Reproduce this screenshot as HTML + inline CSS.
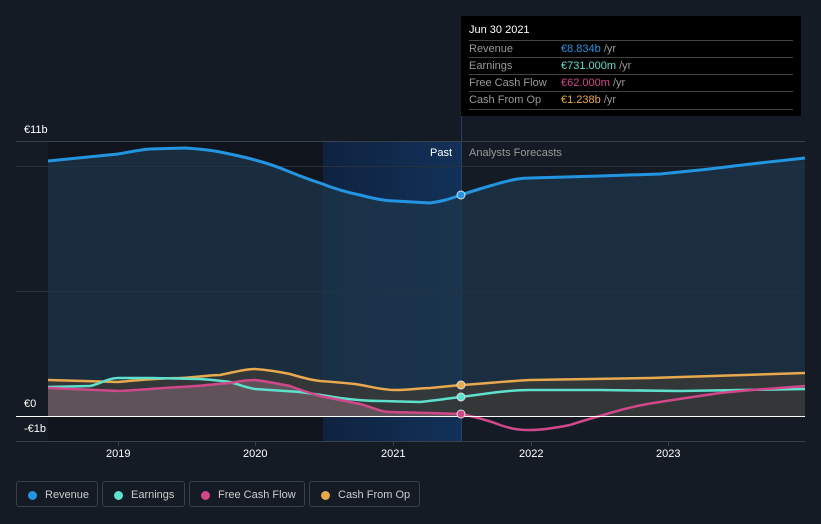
<!DOCTYPE html><html><head><style>
body{margin:0;width:821px;height:524px;background:#151b24;font-family:"Liberation Sans",sans-serif;overflow:hidden;position:relative}
.t{position:absolute;font-size:11px;color:#fff}
.tip{position:absolute;left:461px;top:16px;width:340px;height:100px;background:#000;}
.tip .r{position:absolute;left:8px;width:324px;border-top:1px solid #444;font-size:11px;color:#999;height:17px;line-height:17px}
.tip .r span{position:absolute;left:92px}
.leg{position:absolute;top:481px;height:26px;border:1px solid #3a404a;border-radius:3px;font-size:11px;color:#ccc;line-height:26px;box-sizing:border-box}
.leg i{position:absolute;left:11px;top:9px;width:9px;height:9px;border-radius:50%}
</style></head><body>
<svg width="821" height="524" style="position:absolute;left:0;top:0">
<defs><linearGradient id="bl" x1="0" x2="1"><stop offset="0" stop-color="#0f2340"/><stop offset="1" stop-color="#123158"/></linearGradient></defs>
<rect x="48" y="142" width="275" height="299" fill="#10151d"/>
<rect x="323" y="142" width="138" height="299" fill="url(#bl)"/>
<line x1="16" y1="141.5" x2="805" y2="141.5" stroke="#3a404a"/>
<line x1="16" y1="166.5" x2="805" y2="166.5" stroke="#2a303a"/>
<line x1="16" y1="291.5" x2="805" y2="291.5" stroke="#2a303a"/>
<line x1="16" y1="441.5" x2="805" y2="441.5" stroke="#3a404a"/>
<line x1="461.5" y1="16" x2="461.5" y2="441" stroke="#2a4060"/>
<path d="M48,161 C80,158 100,156 118,154 C135,151 145,149 150,149 L185,148 C200,149 210,150 220,152 C235,155 245,157 255,160 C270,164 278,167 285,170 C300,176 310,180 320,183 C335,189 345,192 360,195 C375,199 385,201 395,201 L430,203 C445,201 452,198 461,195 C475,190 490,186 500,183 C515,179 522,178 530,178 L600,176 L660,174 C680,172 690,171 700,170 C720,168 740,165 760,163 L805,158 L805,416 L48,416Z" fill="#1d3549" opacity=".75"/>
<path d="M48,380 L118,382 C140,380 160,378 180,378 C200,377 210,375 220,375 C235,372 245,369 255,369 C270,370 280,372 290,374 C300,377 310,380 320,381 C335,382 345,383 355,384 C370,386 380,390 395,390 C410,390 420,388 430,388 L461,385 C490,383 510,381 530,380 L650,378 L805,373 L805,416 L48,416Z" fill="#3a3a36" opacity=".8"/>
<path d="M48,388 L120,391 C140,390 160,388 180,387 C200,386 215,384 230,383 C240,381 248,380 255,380 C270,382 280,384 290,386 C300,390 310,393 320,396 C335,399 345,401 360,404 C375,408 380,412 390,412 L430,413 L461,414 L461,416 L48,416Z" fill="#6a5a62" opacity=".8"/>
<path d="M48,161 C80,158 100,156 118,154 C135,151 145,149 150,149 L185,148 C200,149 210,150 220,152 C235,155 245,157 255,160 C270,164 278,167 285,170 C300,176 310,180 320,183 C335,189 345,192 360,195 C375,199 385,201 395,201 L430,203 C445,201 452,198 461,195 C475,190 490,186 500,183 C515,179 522,178 530,178 L600,176 L660,174 C680,172 690,171 700,170 C720,168 740,165 760,163 L805,158" fill="none" stroke="#2394e0" stroke-width="3"/>
<path d="M48,380 L118,382 C140,380 160,378 180,378 C200,377 210,375 220,375 C235,372 245,369 255,369 C270,370 280,372 290,374 C300,377 310,380 320,381 C335,382 345,383 355,384 C370,386 380,390 395,390 C410,390 420,388 430,388 L461,385 C490,383 510,381 530,380 L650,378 L805,373" fill="none" stroke="#e8a94e" stroke-width="2.5"/>
<path d="M48,387 L90,386 C100,384 108,378 118,378 L150,378 L200,379 C215,380 222,381 230,382 C240,385 248,388 255,389 C270,390 285,391 300,392 C315,394 328,396 340,398 C355,400 365,401 380,401 L420,402 C440,400 450,398 461,397 C490,393 510,390 530,390 L600,390 L680,391 L805,389" fill="none" stroke="#5fe0cc" stroke-width="2.5"/>
<path d="M48,388 L120,391 C140,390 160,388 180,387 C200,386 215,384 230,383 C240,381 248,380 255,380 C270,382 280,384 290,386 C300,390 310,393 320,396 C335,399 345,401 360,404 C375,408 380,412 390,412 L430,413 L461,414 C480,418 490,421 500,425 C515,430 522,430 530,430 C545,430 560,427 570,425 C585,420 600,416 610,413 C630,407 645,404 660,402 C685,398 700,396 720,393 C760,389 780,388 805,386" fill="none" stroke="#d0488a" stroke-width="2.5"/>
<line x1="16" y1="416.5" x2="805" y2="416.5" stroke="#fff" stroke-width="1"/>
<line x1="118.5" y1="441" x2="118.5" y2="446" stroke="#3a404a"/><line x1="255.5" y1="441" x2="255.5" y2="446" stroke="#3a404a"/><line x1="393.5" y1="441" x2="393.5" y2="446" stroke="#3a404a"/><line x1="531.5" y1="441" x2="531.5" y2="446" stroke="#3a404a"/><line x1="668.5" y1="441" x2="668.5" y2="446" stroke="#3a404a"/>
<circle cx="461" cy="195" r="4" fill="#2394e0" stroke="#ddd"/>
<circle cx="461" cy="385" r="4" fill="#e8a94e" stroke="#ddd"/>
<circle cx="461" cy="397" r="4" fill="#5fe0cc" stroke="#ddd"/>
<circle cx="461" cy="414" r="4" fill="#d0488a" stroke="#ddd"/>
</svg>
<div class="t" style="left:24px;top:124px">€11b</div>
<div class="t" style="left:24px;top:398px">€0</div>
<div class="t" style="left:24px;top:423px">-€1b</div>
<div class="t" style="left:430px;top:147px">Past</div>
<div class="t" style="left:469px;top:147px;color:#999">Analysts Forecasts</div>
<div class="t" style="left:106px;top:448px">2019</div>
<div class="t" style="left:243px;top:448px">2020</div>
<div class="t" style="left:381px;top:448px">2021</div>
<div class="t" style="left:519px;top:448px">2022</div>
<div class="t" style="left:656px;top:448px">2023</div>
<div class="tip">
<div style="position:absolute;left:8px;top:8px;font-size:11px;color:#fff">Jun 30 2021</div>
<div class="r" style="top:24px">Revenue<span><b style="font-weight:normal;color:#2394e0">€8.834b</b> /yr</span></div>
<div class="r" style="top:41px">Earnings<span><b style="font-weight:normal;color:#5fe0cc">€731.000m</b> /yr</span></div>
<div class="r" style="top:58px">Free Cash Flow<span><b style="font-weight:normal;color:#d0488a">€62.000m</b> /yr</span></div>
<div class="r" style="top:75px;border-bottom:1px solid #444">Cash From Op<span><b style="font-weight:normal;color:#e8a94e">€1.238b</b> /yr</span></div>
</div>
<div class="leg" style="left:16px;width:82px"><i style="background:#2394e0"></i><span style="margin-left:28px">Revenue</span></div>
<div class="leg" style="left:102px;width:83px"><i style="background:#5fe0cc"></i><span style="margin-left:28px">Earnings</span></div>
<div class="leg" style="left:189px;width:116px"><i style="background:#d0488a"></i><span style="margin-left:28px">Free Cash Flow</span></div>
<div class="leg" style="left:309px;width:111px"><i style="background:#e8a94e"></i><span style="margin-left:28px">Cash From Op</span></div>
</body></html>
